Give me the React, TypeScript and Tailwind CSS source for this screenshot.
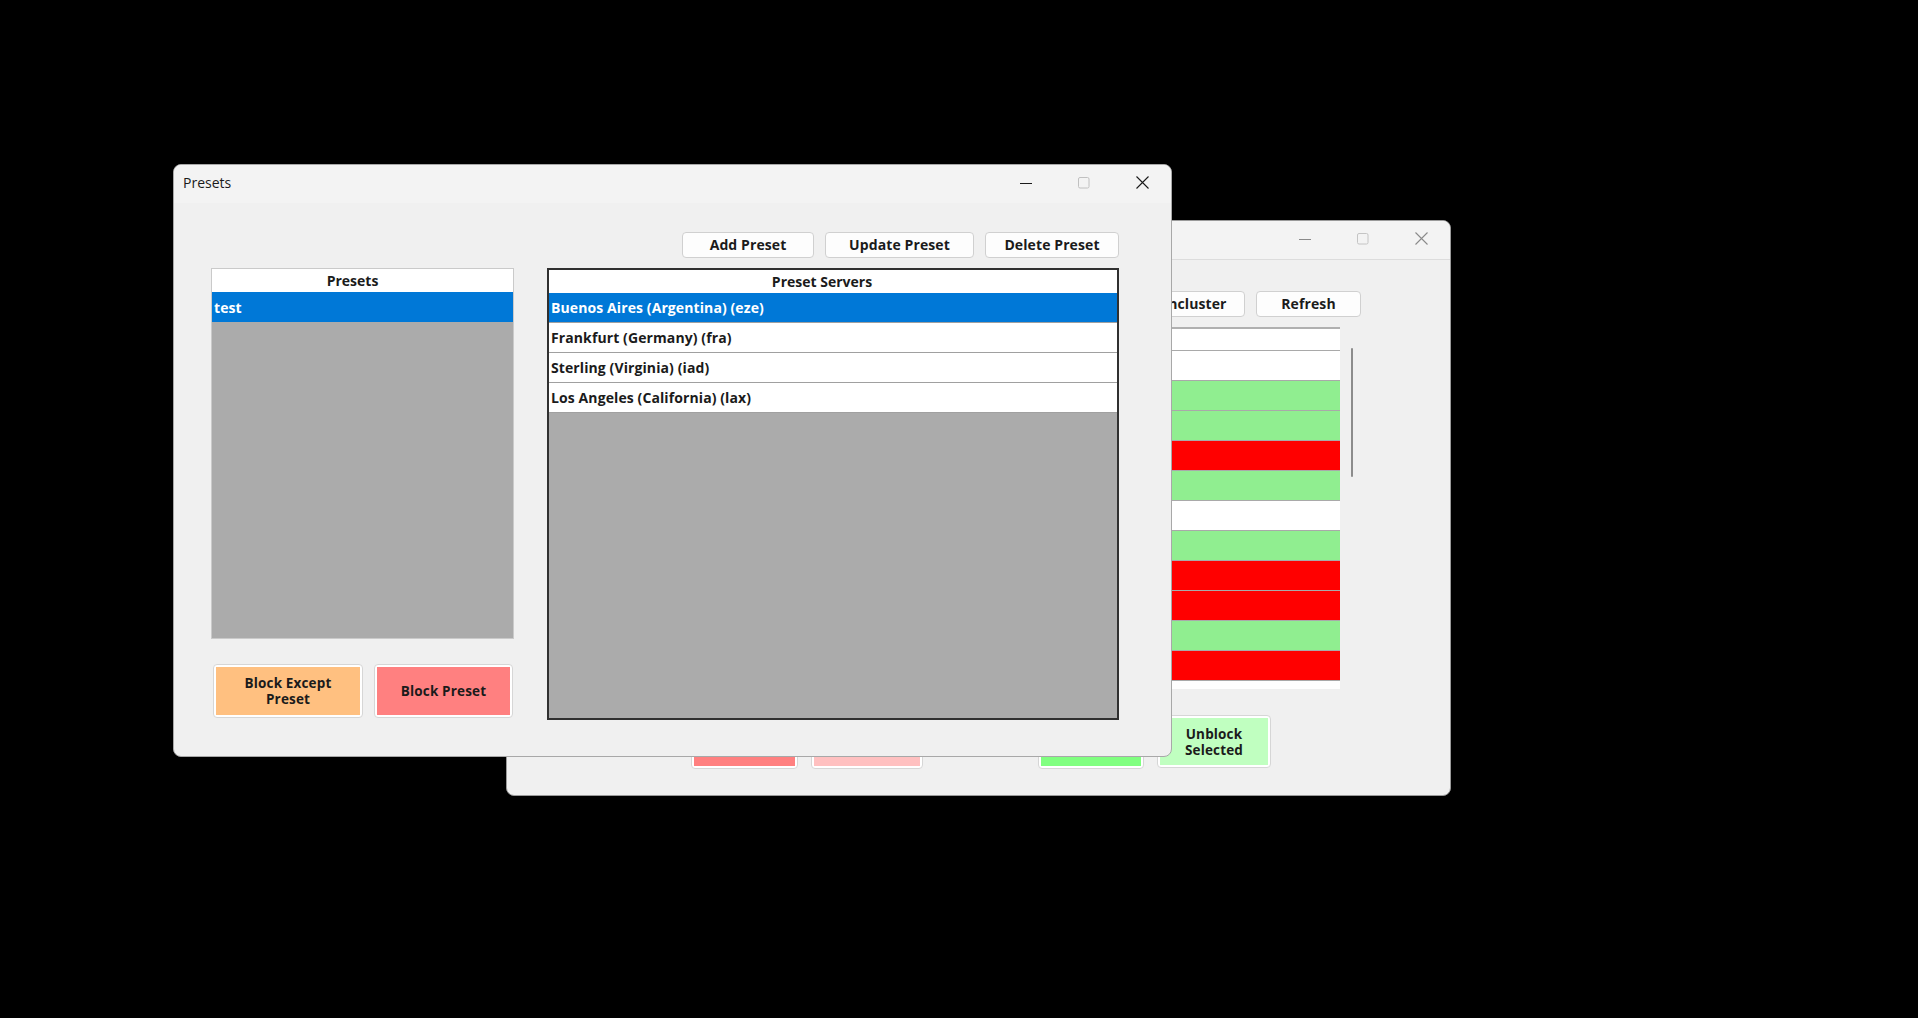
import React from 'react';

const FONT = "font-['Open_Sans','Liberation_Sans',sans-serif]";

// Windows 11 style caption buttons
const Caption: React.FC<{ inactive?: boolean }> = ({ inactive }) => {
  const c = inactive ? '#8a8a8a' : '#1a1a1a';
  return (
    <div className="flex h-full items-center pb-[3px]">
      <div className="w-[58px] flex items-center justify-center">
        <svg width="12" height="12" viewBox="0 0 12 12">
          <line x1="0" y1="6.5" x2="12" y2="6.5" stroke={c} strokeWidth="1" />
        </svg>
      </div>
      <div className="w-[58px] flex items-center justify-center">
        <svg width="12" height="12" viewBox="0 0 12 12">
          <rect x="0.5" y="0.5" width="10.5" height="10.5" rx="1.5" fill="none" stroke={inactive ? '#c4c4c4' : '#c0c0c0'} strokeWidth="1" />
        </svg>
      </div>
      <div className="w-[58px] flex items-center justify-center">
        <svg width="13" height="13" viewBox="0 0 13 13">
          <path d="M0.5 0.5 L12.5 12.5 M12.5 0.5 L0.5 12.5" stroke={c} strokeWidth="1.1" />
        </svg>
      </div>
    </div>
  );
};

const PlainButton: React.FC<{ label: string; w: string }> = ({ label, w }) => (
  <button className={`${w} h-[26px] pb-[1px] rounded-[4px] border border-[#d0d0d0] bg-[#fdfdfd] text-[14px] leading-[18px] font-bold text-[#1b1b1b] tracking-[0.1px]`}>
    {label}
  </button>
);

const ColorButton: React.FC<{ lines: string[]; w: string; fill: string; h?: string }> = ({ lines, w, fill, h = 'h-[54px]' }) => (
  <div className={`${w} ${h} rounded-[4px] border border-[#d6d6d6] bg-white p-[2px]`}>
    <div className={`${fill} h-full w-full flex flex-col items-center justify-center text-center text-[13.5px] leading-[16px] font-bold text-[#1b1b1b] tracking-[0.15px]`}>
      {lines.map((l) => (
        <div key={l}>{l}</div>
      ))}
    </div>
  </div>
);

const servers = [
  'Buenos Aires (Argentina) (eze)',
  'Frankfurt (Germany) (fra)',
  'Sterling (Virginia) (iad)',
  'Los Angeles (California) (lax)',
];

const rowColors = [
  'bg-white',
  'bg-[#90ee90]',
  'bg-[#90ee90]',
  'bg-[#ff0000]',
  'bg-[#90ee90]',
  'bg-white',
  'bg-[#90ee90]',
  'bg-[#ff0000]',
  'bg-[#ff0000]',
  'bg-[#90ee90]',
  'bg-[#ff0000]',
  'bg-white',
];

const BackWindow: React.FC = () => (
  <div className="absolute left-[506px] top-[220px] w-[945px] h-[576px] rounded-[8px] bg-[#f0f0f0] border border-[#9a9a9a] overflow-hidden flex flex-col">
    {/* Title bar */}
    <div className="h-[39px] shrink-0 flex justify-end bg-[#f3f3f3] border-b border-[#dcdcdc]">
      <Caption inactive />
    </div>

    {/* Toolbar */}
    <div className="mt-[31px] flex justify-end gap-[11px] pr-[89px]">
      <PlainButton label="Uncluster" w="w-[106px]" />
      <PlainButton label="Refresh" w="w-[105px]" />
    </div>

    {/* Server table + scrollbar */}
    <div className="mt-[10px] flex pl-[40px] pr-[97px] gap-[11px]">
      <div className="flex-1 h-[362px] overflow-hidden border-t-2 border-[#b0b0b0] bg-white">
        <div className="h-[22px] bg-white border-b border-[#a9a9a9]" />
        {rowColors.map((c, i) => (
          <div key={i} className={`h-[30px] ${c} border-b border-[#a9a9a9]`} />
        ))}
      </div>
      <div className="pt-[21px]">
        <div className="w-[2px] h-[129px] bg-[#8c8c8c] rounded-full" />
      </div>
    </div>

    {/* Bottom actions */}
    <div className="mt-[26px] flex pl-[184px]">
      <ColorButton lines={['Block']} w="w-[107px]" fill="bg-[#ff8080]" />
      <div className="w-[13px]" />
      <ColorButton lines={['Unblock']} w="w-[112px]" fill="bg-[#ffc0c0]" />
      <div className="w-[115px]" />
      <ColorButton lines={['Block', 'Selected']} w="w-[106px]" fill="bg-[#80ff80]" />
      <div className="w-[13px]" />
      <ColorButton lines={['Unblock', 'Selected']} w="w-[114px]" fill="bg-[#c0ffc0]" h="h-[53px]" />
    </div>
  </div>
);

const FrontWindow: React.FC = () => (
  <div className="absolute left-[173px] top-[164px] w-[999px] h-[593px] rounded-[8px] bg-[#f0f0f0] border border-[#a8a8a8] overflow-hidden flex flex-col">
    {/* Title bar */}
    <div className="h-[38px] shrink-0 flex items-center justify-between bg-[#f3f3f3]">
      <span className="pl-[9px] pb-[3px] text-[14px] text-[#1a1a1a]">Presets</span>
      <Caption />
    </div>

    <div className="flex flex-col pl-[37px] pr-[52px]">
      {/* Top toolbar */}
      <div className="mt-[29px] flex justify-end gap-[11px]">
        <PlainButton label="Add Preset" w="w-[132px]" />
        <PlainButton label="Update Preset" w="w-[149px]" />
        <PlainButton label="Delete Preset" w="w-[134px]" />
      </div>

      <div className="mt-[10px] flex gap-[33px]">
        {/* Left column */}
        <div className="w-[303px] flex flex-col">
          <div className="h-[371px] border border-[#cacaca] bg-[#ababab] flex flex-col">
            <div className="h-[23px] pb-[1px] bg-white flex items-center justify-center pr-[20px] text-[14px] font-bold text-[#1b1b1b]">
              Presets
            </div>
            <div className="h-[30px] bg-[#0078d7] flex items-center pl-[2px] text-[14px] font-bold text-white tracking-[0.1px]">
              test
            </div>
          </div>
          <div className="mt-[25px] ml-[2px] flex gap-[11px]">
            <ColorButton lines={['Block Except', 'Preset']} w="w-[150px]" fill="bg-[#ffc080]" />
            <ColorButton lines={['Block Preset']} w="w-[139px]" fill="bg-[#ff8080]" />
          </div>
        </div>

        {/* Preset servers */}
        <div className="flex-1 h-[452px] border-2 border-[#303030] bg-[#ababab] flex flex-col">
          <div className="h-[23px] pb-[1px] bg-white flex items-center justify-center pr-[22px] text-[14px] font-bold text-[#1b1b1b]">
            Preset Servers
          </div>
          {servers.map((s, i) => (
            <div
              key={s}
              className={`h-[30px] flex items-center pl-[2px] text-[14px] font-bold tracking-[0.1px] border-b border-[#a0a0a0] ${
                i === 0 ? 'bg-[#0078d7] text-white' : 'bg-white text-[#1b1b1b]'
              }`}
            >
              {s}
            </div>
          ))}
        </div>
      </div>
    </div>
  </div>
);

export default function App() {
  return (
    <div className={`relative w-[1918px] h-[1018px] bg-black overflow-hidden ${FONT}`}>
      <BackWindow />
      <FrontWindow />
    </div>
  );
}
